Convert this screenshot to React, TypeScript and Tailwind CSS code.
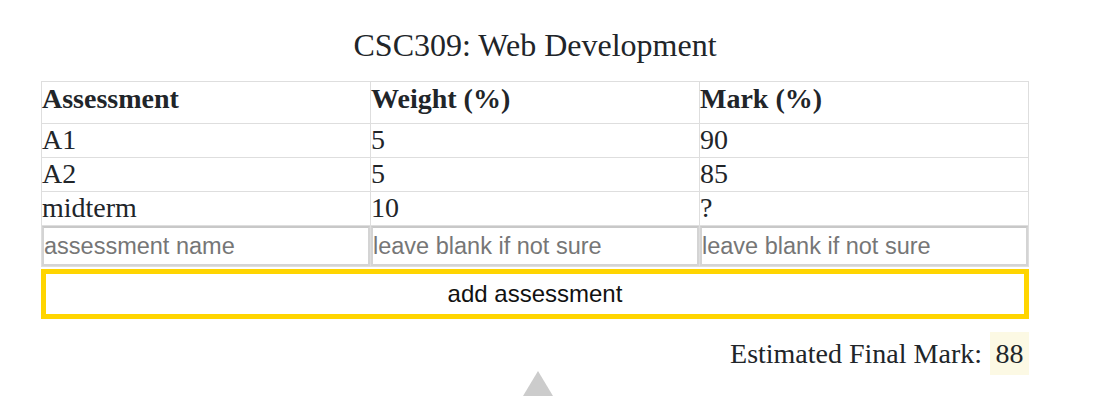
import { useState } from "react";

type Row = { name: string; weight: string; mark: string };

const rows: Row[] = [
  { name: "A1", weight: "5", mark: "90" },
  { name: "A2", weight: "5", mark: "85" },
  { name: "midterm", weight: "10", mark: "?" },
];

export default function App() {
  const [name, setName] = useState("");
  const [weight, setWeight] = useState("");
  const [mark, setMark] = useState("");

  const cell = "border border-[#dedede] px-0 py-0 text-left align-top";
  const input =
    "block w-full h-[40px] border-2 border-[#d4d4d4] border-t-[#c8c8c8] bg-white px-0 text-[23.5px] text-[#222] placeholder:text-[#767676] outline-none font-['Helvetica','Liberation_Sans',Arial,sans-serif]";

  return (
    <div className="w-[1094px] h-[406px] bg-white overflow-hidden font-['Liberation_Serif','Times_New_Roman',serif] text-[#212529]">
      <div className="ml-[41px] w-[988px]">
        <h1 className="pt-[25px] h-[81px] text-center text-[32px] leading-[40px]">
          CSC309: Web Development
        </h1>

        <table className="w-full border-collapse table-fixed">
          <thead>
            <tr className="h-[42px]">
              <th className={`${cell} font-bold text-[28px] leading-[34px]`}>Assessment</th>
              <th className={`${cell} font-bold text-[28px] leading-[34px]`}>Weight (%)</th>
              <th className={`${cell} font-bold text-[28px] leading-[34px]`}>Mark (%)</th>
            </tr>
          </thead>
          <tbody>
            {rows.map((r) => (
              <tr key={r.name} className="h-[34px]">
                <td className={`${cell} text-[28px] leading-[32px]`}>{r.name}</td>
                <td className={`${cell} text-[28px] leading-[32px]`}>{r.weight}</td>
                <td className={`${cell} text-[28px] leading-[32px]`}>{r.mark}</td>
              </tr>
            ))}
            <tr>
              <td className={cell}>
                <input
                  className={input}
                  placeholder="assessment name"
                  value={name}
                  onChange={(e) => setName(e.target.value)}
                />
              </td>
              <td className={cell}>
                <input
                  className={input}
                  placeholder="leave blank if not sure"
                  value={weight}
                  onChange={(e) => setWeight(e.target.value)}
                />
              </td>
              <td className={cell}>
                <input
                  className={input}
                  placeholder="leave blank if not sure"
                  value={mark}
                  onChange={(e) => setMark(e.target.value)}
                />
              </td>
            </tr>
          </tbody>
        </table>

        <button className="mt-[2px] block w-full h-[50px] border-[5px] border-[#ffd500] bg-white text-[24px] text-[#111] font-['Helvetica','Liberation_Sans',Arial,sans-serif]">
          add assessment
        </button>

        <div className="mt-[13px] flex justify-end items-center text-[28px]">
          <span className="mr-[8px]">Estimated Final Mark:</span>
          <span className="bg-[#fcf9e4] w-[39px] text-center h-[43px] leading-[43px]">88</span>
        </div>
      </div>

      <div className="mt-[-4px] flex justify-center">
        <svg width="32" height="26" viewBox="0 0 32 26" className="ml-[-18px]">
          <polygon points="16,0 31,25 1,25" fill="#cccccc" />
        </svg>
      </div>
    </div>
  );
}
